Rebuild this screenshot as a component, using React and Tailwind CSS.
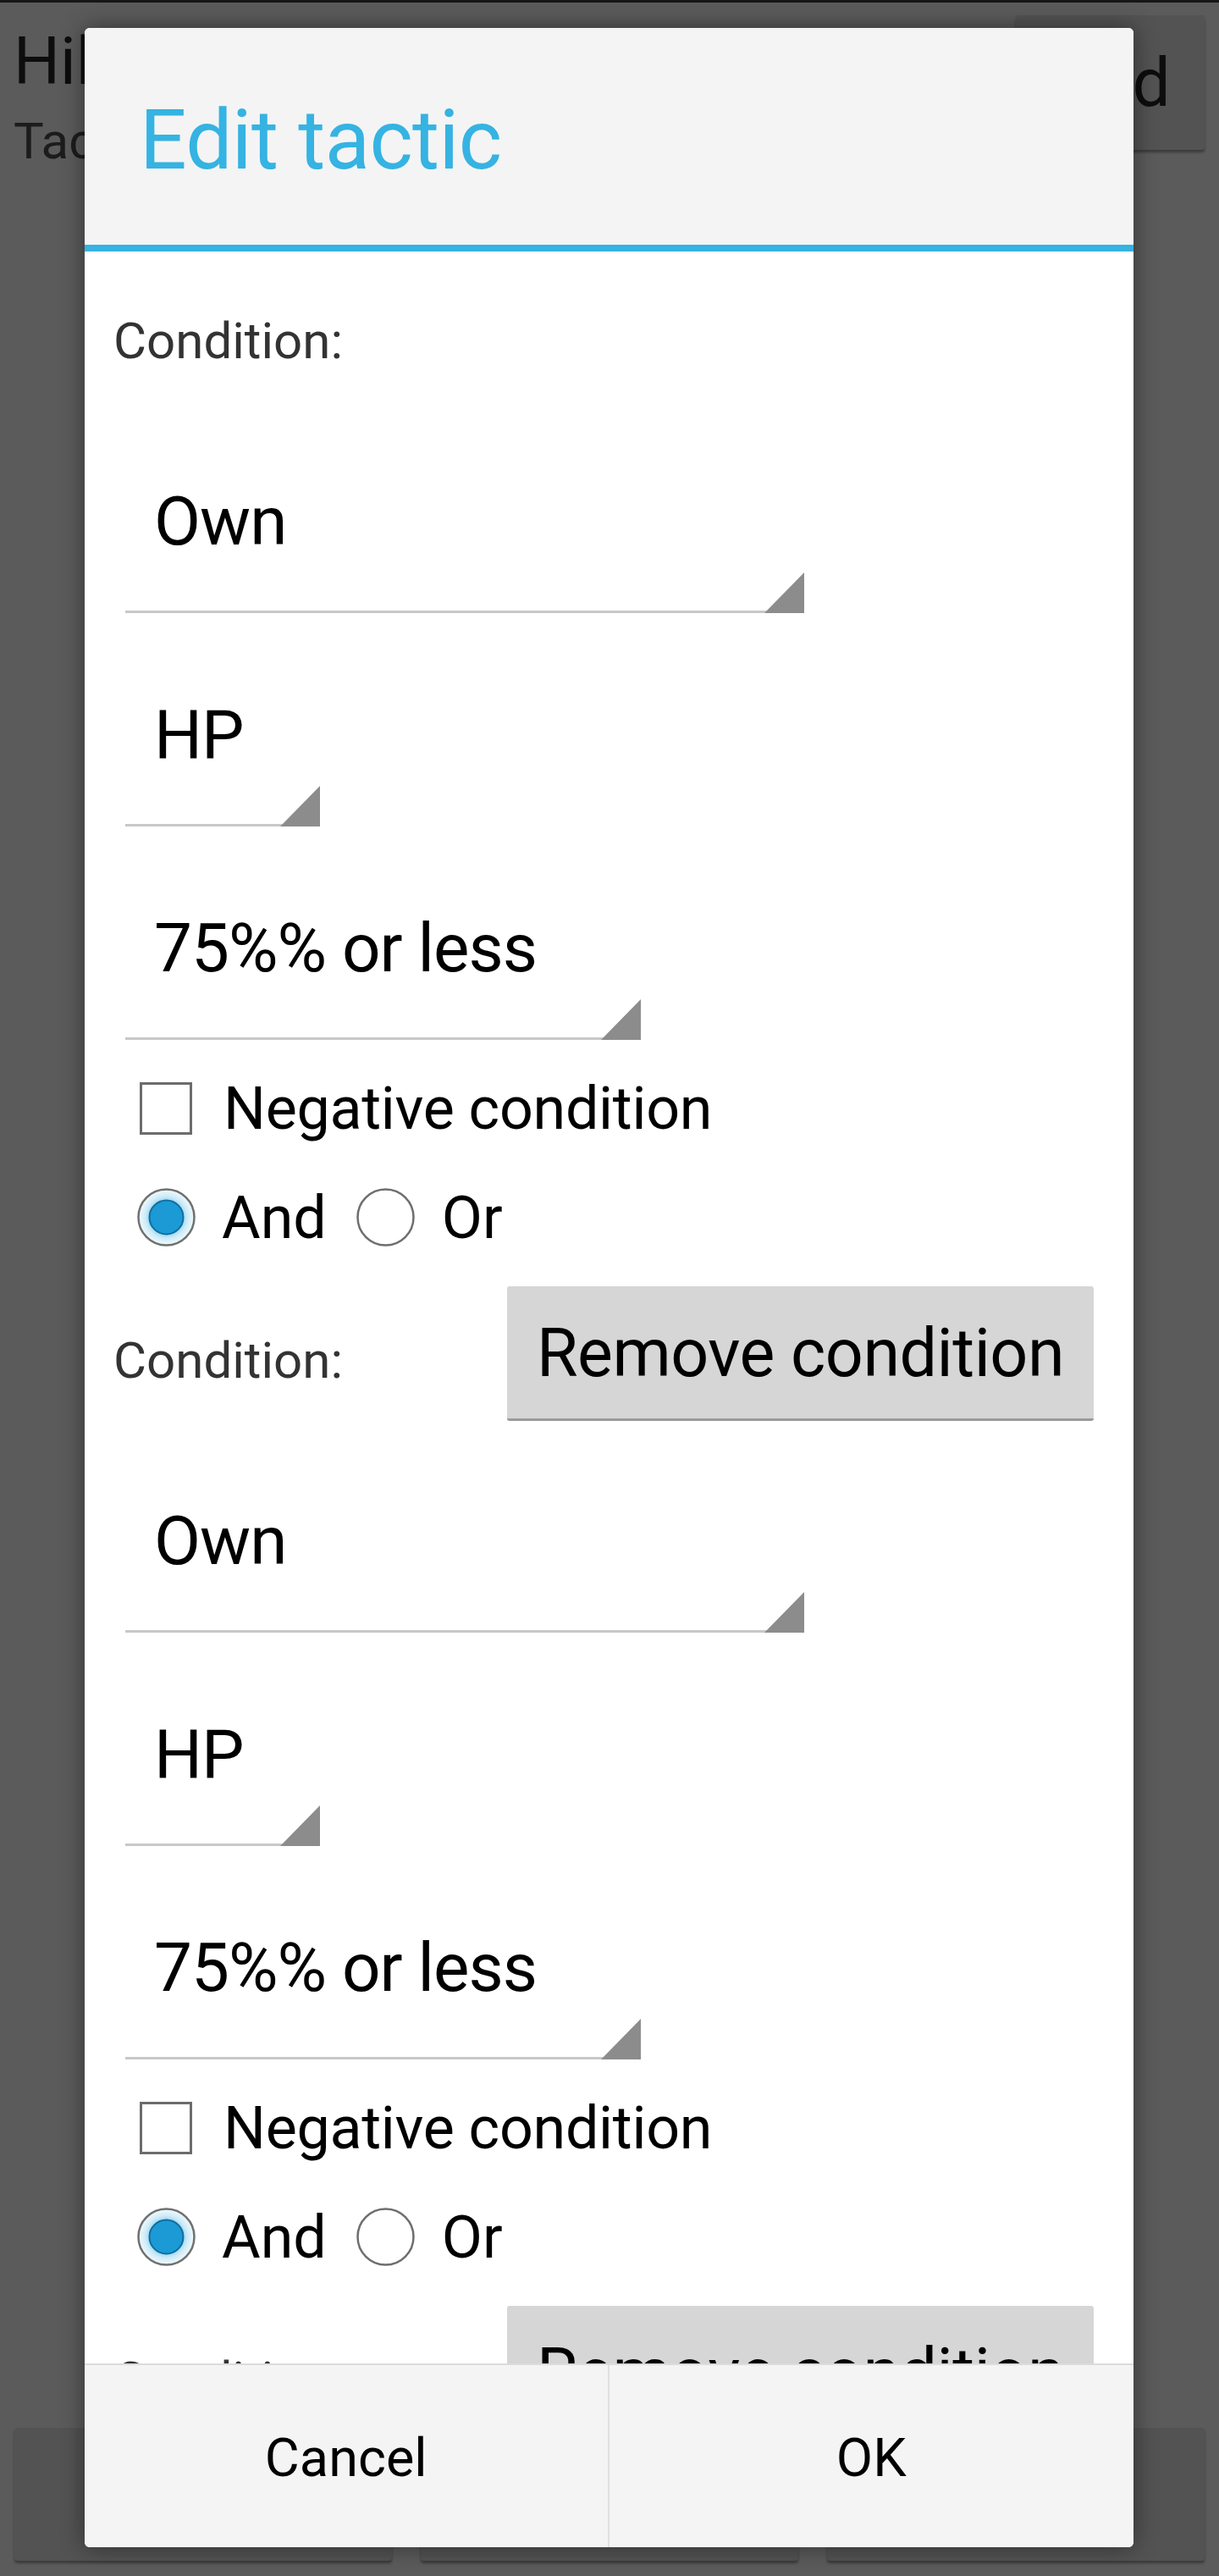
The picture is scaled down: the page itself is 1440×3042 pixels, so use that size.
import React from 'react';

function Spinner({ width, text }) {
  return (
    <div className="pt-[102px] pb-[2px]">
      <div className="relative ml-[48px] h-[148px] border-b-[3px] border-[#c8c8c8]" style={{ width }}>
        <div className="pl-[34px] text-[80px] leading-none tracking-[-1px] text-black whitespace-nowrap">{text}</div>
        <svg className="absolute right-0 bottom-[-3px]" width="47" height="48" viewBox="0 0 47 48">
          <polygon points="47,0 47,48 0,48" fill="#8c8c8c" />
        </svg>
      </div>
    </div>
  );
}

function Radio({ checked, id }) {
  if (!checked) {
    return (
      <svg width="69" height="69" viewBox="0 0 69 69" className="shrink-0">
        <circle cx="34.5" cy="34.5" r="33" fill="#ffffff" stroke="#6e6e6e" strokeWidth="2.5" />
      </svg>
    );
  }
  return (
    <svg width="69" height="69" viewBox="0 0 69 69" className="shrink-0">
      <defs>
        <radialGradient id={`glow-${id}`} cx="50%" cy="50%" r="50%">
          <stop offset="0.55" stopColor="#8fd0ee" />
          <stop offset="0.75" stopColor="#cdebf8" />
          <stop offset="1" stopColor="#f2fafd" />
        </radialGradient>
      </defs>
      <circle cx="34.5" cy="34.5" r="33" fill={`url(#glow-${id})`} stroke="#707070" strokeWidth="2.5" />
      <circle cx="34.5" cy="34.5" r="20" fill="#1b9ad6" stroke="#0f6f9e" strokeWidth="2" />
    </svg>
  );
}

function ConditionBlock({ index, removable }) {
  return (
    <div>
      <div className="h-[159px] flex items-center justify-between pl-[34px] pr-[47px]">
        <span className="mt-[16px] text-[60px] leading-none text-[#333333]">Condition:</span>
        {removable && (
          <button className="w-[693px] h-[159px] pt-[2px] bg-[#d6d6d6] border-b-[3px] border-[#9a9a9a] rounded-[3px] text-[79px] leading-none tracking-[-0.5px] text-black">
            Remove condition
          </button>
        )}
      </div>
      <Spinner width={802} text="Own" />
      <Spinner width={230} text="HP" />
      <Spinner width={609} text="75%% or less" />
      <div className="mt-[48px] h-[62px] flex items-center pl-[65px]">
        <div className="w-[62px] h-[62px] border-[3px] border-[#6c6c6c] bg-white shrink-0" />
        <span className="ml-[37px] text-[70px] leading-none tracking-[-0.3px] text-black">Negative condition</span>
      </div>
      <div className="mt-[63px] mb-[47px] h-[69px] flex items-center pl-[62px]">
        <Radio checked id={index} />
        <span className="ml-[31px] text-[70px] leading-none text-black">And</span>
        <div className="ml-[35px]">
          <Radio checked={false} id={index} />
        </div>
        <span className="ml-[32px] text-[70px] leading-none text-black">Or</span>
      </div>
    </div>
  );
}

export default function App() {
  return (
    <div className="relative w-[1440px] h-[3042px] overflow-hidden bg-[#5b5b5b] font-['Roboto',sans-serif]">
      {/* screen behind the dialog */}
      <div className="h-full flex flex-col justify-between border-t-[3px] border-[#161616]">
        <div className="flex justify-between pl-[16px] pr-[17px]">
          <div className="pt-[32px]">
            <div className="text-[77px] leading-none text-[#0d0d0d]">Hil</div>
            <div className="mt-[25px] text-[60px] leading-none text-[#1c1c1c]">Tac</div>
          </div>
          <div className="mt-[15px] w-[223px] h-[159px] rounded-[4px] bg-[#535353] shadow-[0_3px_3px_rgba(0,0,0,0.35)] flex items-center justify-center text-[80px] leading-none text-[#0d0d0d]">
            Add
          </div>
        </div>
        <div className="grid grid-cols-3 gap-[34px] px-[17px] mb-[18px]">
          <div className="h-[157px] rounded-[4px] bg-[#535353] shadow-[0_3px_3px_rgba(0,0,0,0.35)]" />
          <div className="h-[157px] rounded-[4px] bg-[#535353] shadow-[0_3px_3px_rgba(0,0,0,0.35)]" />
          <div className="h-[157px] rounded-[4px] bg-[#535353] shadow-[0_3px_3px_rgba(0,0,0,0.35)]" />
        </div>
      </div>

      {/* dialog */}
      <div className="absolute left-[100px] top-[33px] w-[1239px] h-[2975px] flex flex-col rounded-[6px] overflow-hidden bg-white shadow-[0_0_28px_rgba(0,0,0,0.45)]">
        <div className="h-[256px] shrink-0 bg-[#f4f4f4] flex items-center pl-[65px] pt-[10px]">
          <h1 className="text-[98px] leading-none font-normal tracking-[-0.6px] text-[#35b3e2]">Edit tactic</h1>
        </div>
        <div className="h-[8px] shrink-0 bg-[#35b3e2]" />
        <div className="h-[2494px] shrink-0 overflow-hidden pt-[18px]">
          <ConditionBlock index={0} removable={false} />
          <ConditionBlock index={1} removable />
          <ConditionBlock index={2} removable />
        </div>
        <div className="h-[217px] shrink-0 grid grid-cols-2 bg-[#f4f4f4] border-t-2 border-[#dcdcdc] divide-x-2 divide-[#e0e0e0]">
          <button className="flex items-center justify-center pt-[4px] text-[63px] leading-none text-black">Cancel</button>
          <button className="flex items-center justify-center pt-[4px] text-[63px] leading-none text-black">OK</button>
        </div>
      </div>
    </div>
  );
}
